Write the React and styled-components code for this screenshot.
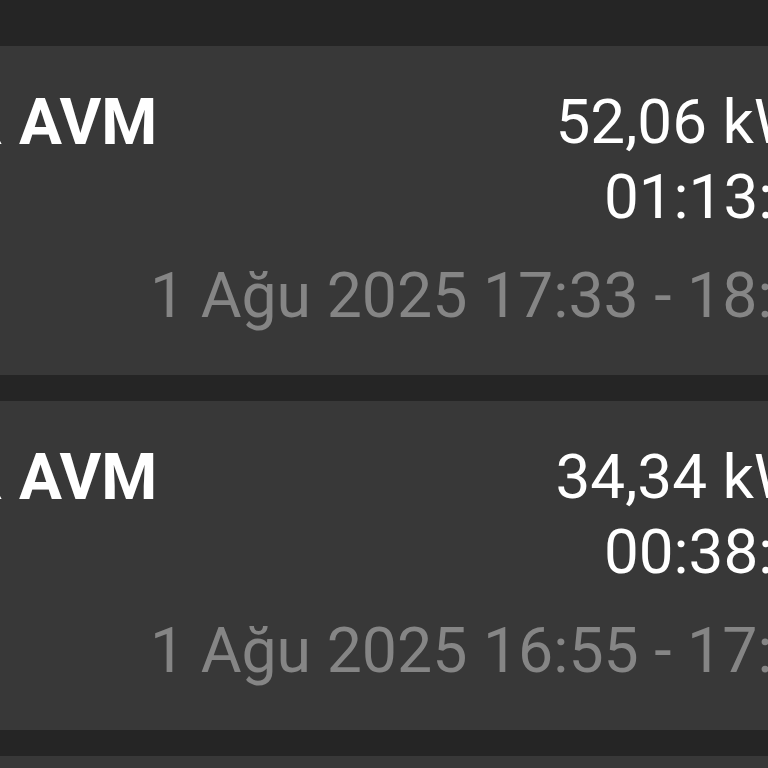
import React from "react";
import styled, { createGlobalStyle } from "styled-components";

const Global = createGlobalStyle`
  html, body { margin: 0; padding: 0; background: #252525; overflow: hidden; }
  body { font-family: Roboto, "Noto Sans", "Liberation Sans", sans-serif; }
`;

const List = styled.div`
  display: flex;
  flex-direction: column;
  gap: 26px;
  padding-top: 46px;
  margin-left: -38px;
  margin-right: -75px;
`;

const Card = styled.div`
  background: #383838;
  height: 329px;
  display: flex;
  justify-content: space-between;
  align-items: flex-start;
  padding-top: 38px;
  box-sizing: border-box;
  flex-shrink: 0;
`;

const Title = styled.div`
  flex: 1 1 auto;
  min-width: 0;
  color: #ffffff;
  font-weight: 700;
  font-size: 64px;
  line-height: 75px;
  margin-top: 1px;
  white-space: nowrap;
`;

const Info = styled.div`
  flex: 0 0 auto;
  display: flex;
  flex-direction: column;
  align-items: flex-end;
  text-align: right;
`;

const Value = styled.div`
  color: #ffffff;
  font-size: 62px;
  line-height: 75px;
  white-space: nowrap;
`;

const DateLine = styled.div`
  color: #858585;
  font-size: 62.6px;
  line-height: 75px;
  margin-top: 24px;
  white-space: nowrap;
`;

const sessions = [
  { title: "R AVM", energy: "52,06 kWh", duration: "01:13:25", date: "1 Ağu 2025 17:33 - 18:46" },
  { title: "R AVM", energy: "34,34 kWh", duration: "00:38:41", date: "1 Ağu 2025 16:55 - 17:34" },
  { title: "R AVM", energy: "41,12 kWh", duration: "00:52:10", date: "1 Ağu 2025 15:20 - 16:12" },
];

export default function App() {
  return (
    <>
      <Global />
      <List>
        {sessions.map((s, i) => (
          <Card key={i}>
            <Title>{s.title}</Title>
            <Info>
              <Value>{s.energy}</Value>
              <Value>{s.duration}</Value>
              <DateLine>{s.date}</DateLine>
            </Info>
          </Card>
        ))}
      </List>
    </>
  );
}
